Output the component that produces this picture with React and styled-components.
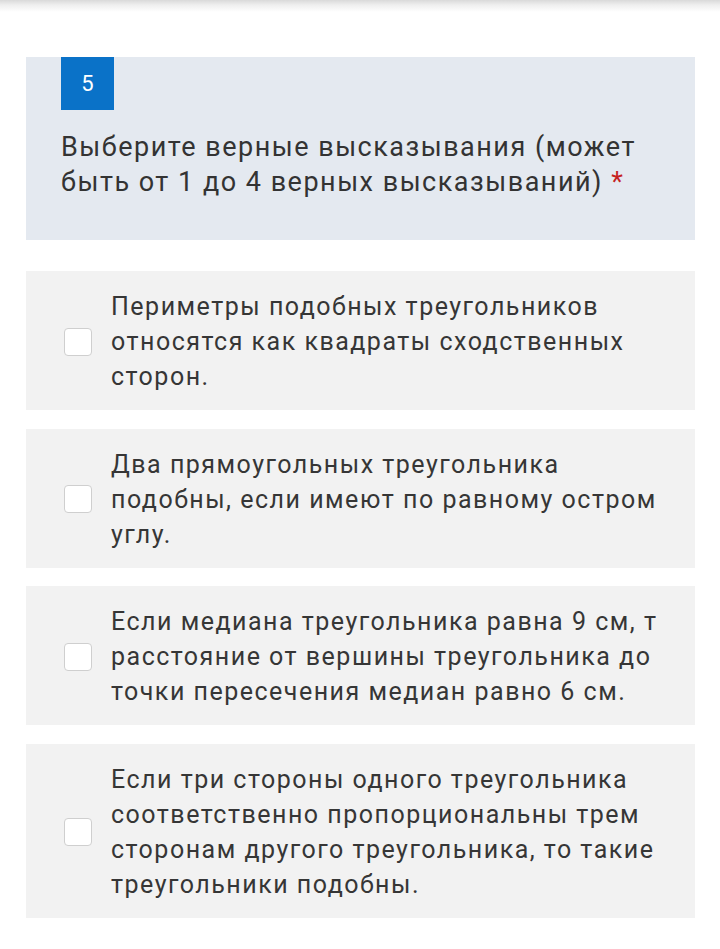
import styled, { createGlobalStyle } from 'styled-components';

const GlobalStyle = createGlobalStyle`
  html, body {
    margin: 0;
    padding: 0;
    background: #ffffff;
  }
  body {
    font-family: Roboto, "Noto Sans", "Liberation Sans", sans-serif;
    color: #363636;
  }
`;

const Page = styled.div`
  width: 720px;
  min-height: 949px;
  background: #fff;
`;

const TopShade = styled.div`
  height: 12px;
  background: linear-gradient(to bottom, #d9d9d9 0%, #eeeeee 40%, #ffffff 100%);
`;

const Content = styled.div`
  padding: 45px 25px 30px 26px;
  display: flex;
  flex-direction: column;
  gap: 18.5px;
`;

const QuestionHeader = styled.div`
  background: #e4e9f0;
  padding: 0 30px 40px 35px;
  margin-bottom: 12.5px;
`;

const Badge = styled.div`
  width: 53px;
  height: 53px;
  background: #0a72c8;
  color: #fff;
  font-size: 22px;
  display: flex;
  align-items: center;
  justify-content: center;
`;

const Title = styled.div`
  margin-top: 20px;
  font-size: 27px;
  letter-spacing: 1.5px;
  line-height: 35px;
  color: #333;
`;

const Required = styled.span`
  color: #c5221f;
`;

const OptionCard = styled.label`
  background: #f2f2f2;
  display: flex;
  align-items: center;
  gap: 19px;
  padding: 18px 0 16px 38px;
`;

const Box = styled.span`
  flex: 0 0 auto;
  width: 26px;
  height: 26px;
  border: 1.5px solid #cfcfcf;
  border-radius: 4px;
  background: #fff;
`;

const Clip = styled.div`
  width: 545px;
  overflow: hidden;
`;

const OptionText = styled.div`
  width: 570px;
  font-size: 25px;
  letter-spacing: 1.5px;
  line-height: 35px;
  color: #363636;
`;

const options = [
  'Периметры подобных треугольников относятся как квадраты сходственных сторон.',
  'Два прямоугольных треугольника подобны, если имеют по равному острому углу.',
  'Если медиана треугольника равна 9 см, то расстояние от вершины треугольника до точки пересечения медиан равно 6 см.',
  'Если три стороны одного треугольника соответственно пропорциональны трем сторонам другого треугольника, то такие треугольники подобны.',
];

export default function App() {
  return (
    <Page>
      <GlobalStyle />
      <TopShade />
      <Content>
        <QuestionHeader>
          <Badge>5</Badge>
          <Title>
            Выберите верные высказывания (может быть от 1 до 4 верных высказываний) <Required>*</Required>
          </Title>
        </QuestionHeader>
        {options.map((text) => (
          <OptionCard key={text}>
            <Box />
            <Clip>
              <OptionText>{text}</OptionText>
            </Clip>
          </OptionCard>
        ))}
      </Content>
    </Page>
  );
}
